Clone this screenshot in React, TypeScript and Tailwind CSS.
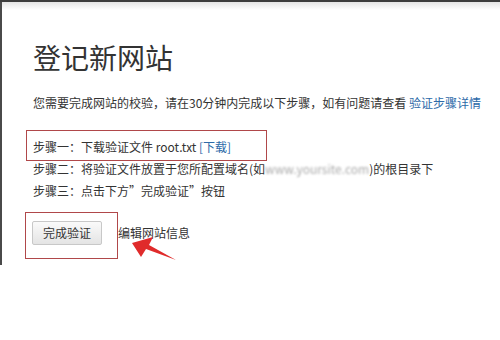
import React from 'react';

const font = "font-['Noto_Sans_CJK_SC','Noto_Sans',sans-serif]";

export default function App() {
  return (
    <div className={`relative w-[500px] h-[340px] bg-white overflow-hidden text-[#333] ${font}`}>
      <div className="h-[2px] bg-[#3c3c3c]" />
      <div className="h-[263px] border-l-2 border-[#4a4a4a]">
        <div className="h-[8px] bg-gradient-to-b from-[#e4e4e4] to-white" />
        <div className="pl-[31px]">
          <h1 className="mt-[29px] h-[36px] text-[28px] leading-[36px] font-normal text-[#333]">登记新网站</h1>
          <p className="mt-[17px] text-[12px] leading-[22px]">
            您需要完成网站的校验，请在30分钟内完成以下步骤，如有问题请查看{' '}
            <a className="text-[#2d6aa8]">验证步骤详情</a>
          </p>
          <div className="mt-[22px] text-[12px] leading-[22px]">
            <p>
              步骤一：下载验证文件 root.txt <a className="text-[#2d6aa8]">[下载]</a>
            </p>
            <p>
              步骤二：将验证文件放置于您所配置域名(如
              <span className="text-[#aaa] blur-[1px]">www.yoursite.com</span>)的根目录下
            </p>
            <p>步骤三：点击下方”完成验证”按钮</p>
          </div>
          <div className="mt-[19px] flex items-center gap-[16px] text-[12px]">
            <button className="h-[24px] px-[10px] -ml-px border border-[#c8c8c8] rounded-[2px] bg-gradient-to-b from-[#fafafa] to-[#e4e4e4] text-[#333] leading-[22px]">
              完成验证
            </button>
            <span>编辑网站信息</span>
          </div>
        </div>
      </div>

      {/* annotation boxes */}
      <div className="absolute left-[26px] top-[130px] w-[241px] h-[31px] border border-[#b0484a]" />
      <div className="absolute left-[25px] top-[212px] w-[93px] h-[47px] border border-[#b0484a]" />
      <svg className="absolute left-0 top-0" width="500" height="340">
        <polygon points="132,243 153,237 149,245 176,260 146,249 141,257" fill="#e02b2b" />
      </svg>
    </div>
  );
}
